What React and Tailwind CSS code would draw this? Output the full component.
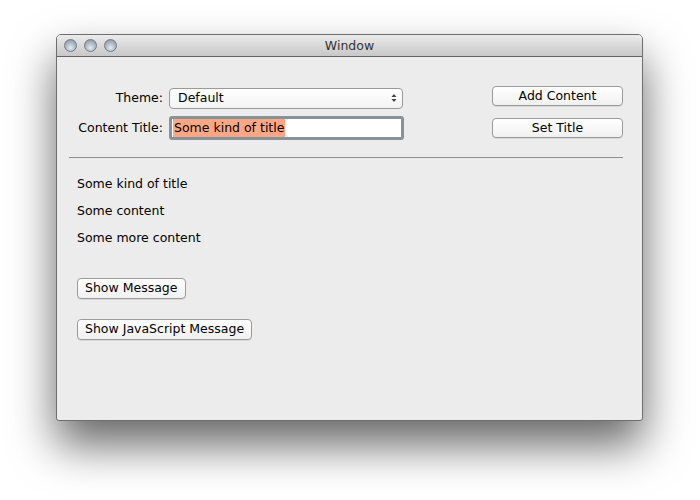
import React from "react";

const font = { fontFamily: '"DejaVu Sans", "Lucida Grande", sans-serif' };

function Btn({ children, className = "" }) {
  return (
    <div
      className={`flex items-center justify-center rounded-[4px] border border-[#9a9a9a] bg-gradient-to-b from-white to-[#f1f1f1] text-[12.5px] text-black shadow-[0_1px_0_rgba(0,0,0,0.08)] ${className}`}
    >
      {children}
    </div>
  );
}

export default function App() {
  return (
    <div className="w-[700px] h-[500px] bg-white pl-[56px] pt-[34px]" style={font}>
      <div className="w-[587px] h-[387px] rounded-t-[5px] rounded-b-[3px] border border-[#6e6e6e] bg-[#ececec] shadow-[0_24px_45px_rgba(0,0,0,0.6)] flex flex-col overflow-hidden">
        <div className="h-[22px] flex items-center relative bg-gradient-to-b from-[#ebebeb] to-[#c8c8c8] border-b border-[#636363] shrink-0">
          <div className="flex gap-[7px] pl-[7px]">
            {[0, 1, 2].map((i) => (
              <div
                key={i}
                className="w-[13px] h-[13px] rounded-full border border-[#6f7a85] bg-[radial-gradient(circle_at_50%_70%,#e4ebf1_0%,#a9b5c0_55%,#8693a0_100%)]"
              />
            ))}
          </div>
          <div className="absolute inset-0 flex items-center justify-center text-[12.5px] text-[#333] pt-[1px]">Window</div>
        </div>
        <div className="flex-1 px-[12px]">
          <div className="flex pt-[29px] pr-[7px]">
            <div className="flex flex-col pt-[1px]">
              <div className="flex items-center h-[22px]">
                <div className="w-[100px] text-right text-[12.5px] pr-[6px]">Theme:</div>
                <div className="w-[234px] h-[21px] rounded-[4px] border border-[#9a9a9a] bg-gradient-to-b from-white to-[#f3f3f3] flex items-center justify-between pl-[8px] pr-[5px] text-[12.5px]">
                  <span>Default</span>
                  <svg width="6" height="10" viewBox="0 0 6 10">
                    <path d="M0.5 4 L3 1 L5.5 4 Z" fill="#444" />
                    <path d="M0.5 6 L3 9 L5.5 6 Z" fill="#444" />
                  </svg>
                </div>
              </div>
              <div className="flex items-center h-[24px] mt-[7px]">
                <div className="w-[100px] text-right text-[12.5px] pr-[6px]">Content Title:</div>
                <div className="w-[235px] h-[24px] rounded-[3px] border-[3px] border-[#8a9299] bg-white flex items-center pl-[1px]">
                  <span className="bg-[#ffa784] text-[12.5px] leading-[18px] px-[1px]">Some kind of title</span>
                </div>
              </div>
            </div>
            <div className="flex-1" />
            <div className="flex flex-col">
              <Btn className="w-[131px] h-[20px]">Add Content</Btn>
              <Btn className="w-[131px] h-[20px] mt-[12px]">Set Title</Btn>
            </div>
          </div>
          <div className="mt-[17px] h-px bg-[#8f8f8f] w-[554px]" />
          <div className="pl-[8px] pt-[17px] text-[12.5px] text-black flex flex-col">
            <div className="h-[18px] leading-[18px]">Some kind of title</div>
            <div className="h-[18px] leading-[18px] mt-[9px]">Some content</div>
            <div className="h-[18px] leading-[18px] mt-[9px]">Some more content</div>
            <div className="flex flex-col items-start mt-[31px]">
              <Btn className="px-[7px] h-[21px]">Show Message</Btn>
              <Btn className="px-[7px] h-[21px] mt-[20px]">Show JavaScript Message</Btn>
            </div>
          </div>
        </div>
      </div>
    </div>
  );
}
